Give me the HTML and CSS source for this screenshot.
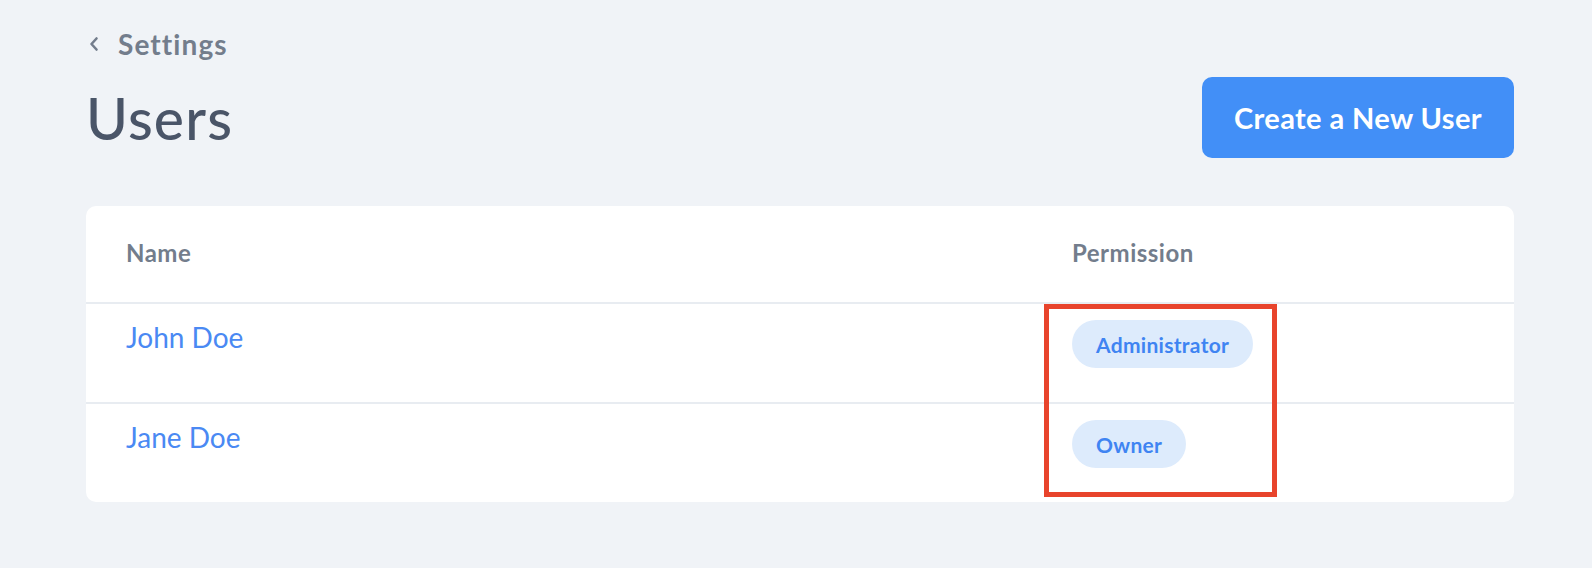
FILE: index.html
```html
<!DOCTYPE html>
<html lang="en">
<head>
<meta charset="utf-8">
<title>Users</title>
<link rel="stylesheet" href="styles.css">
</head>
<body>
<main class="page">
  <a class="breadcrumb" href="#">
    <svg class="chev" width="12" height="16" viewBox="0 0 12 16"><path d="M8.5 2.5 L3.5 8 L8.5 13.5" fill="none" stroke="currentColor" stroke-width="2.6" stroke-linecap="round" stroke-linejoin="round"/></svg>
    <span>Settings</span>
  </a>
  <div class="header">
    <h1 class="title">Users</h1>
    <button class="btn">Create a New User</button>
  </div>
  <section class="card">
    <div class="row head">
      <div class="cell">Name</div>
      <div class="cell">Permission</div>
    </div>
    <div class="row">
      <div class="cell"><a class="name" href="#">John Doe</a></div>
      <div class="cell"><span class="badge">Administrator</span></div>
    </div>
    <div class="row">
      <div class="cell"><a class="name" href="#">Jane Doe</a></div>
      <div class="cell"><span class="badge">Owner</span></div>
    </div>
    <div class="highlight"></div>
  </section>
</main>
</body>
</html>
```

FILE: styles.css
```css
html, body {
  margin: 0;
  padding: 0;
  background: #f0f3f7;
  font-family: Lato, "Noto Sans", sans-serif;
}
.page {
  padding: 28px 78px 0 86px;
}
.breadcrumb {
  display: flex;
  align-items: center;
  gap: 18px;
  color: #737d8c;
  text-decoration: none;
  font-weight: 700;
  font-size: 28px;
  letter-spacing: 1.1px;
  line-height: 32px;
  padding-left: 2px;
}
.chev { color: #737d8c; }
.header {
  display: flex;
  align-items: center;
  justify-content: space-between;
  margin-top: 17px;
}
.title {
  margin: 0;
  font-size: 57px;
  font-weight: 500;
  letter-spacing: 1.2px;
  color: #4a5568;
  line-height: 80px;
}
.btn {
  width: 312px;
  height: 81px;
  border: 0;
  border-radius: 10px;
  background: #428ff7;
  color: #fff;
  font-family: inherit;
  font-weight: 700;
  font-size: 29px;
  letter-spacing: 0.4px;
}
.card {
  position: relative;
  margin-top: 48px;
  background: #fff;
  border-radius: 10px;
}
.row {
  display: grid;
  grid-template-columns: 946px 1fr;
  padding-left: 40px;
  height: 100px;
  border-top: 2px solid #e8ecf1;
  box-sizing: border-box;
}
.row.head {
  height: 96px;
  padding-bottom: 4px;
  border-top: 0;
  align-items: center;
  color: #737d8c;
  font-weight: 700;
  font-size: 24px;
  letter-spacing: 0.5px;
}
.row:not(.head) .cell {
  padding-top: 16px;
}
.name {
  display: block;
  color: #4a89f3;
  text-decoration: none;
  font-size: 28px;
  line-height: 34px;
}
.badge {
  display: inline-flex;
  align-items: center;
  height: 48px;
  padding: 0 24px;
  border-radius: 24px;
  background: #ddebfc;
  color: #3f84f2;
  font-weight: 700;
  font-size: 21px;
  letter-spacing: 0.3px;
}
.highlight {
  position: absolute;
  left: 958px;
  top: 98px;
  width: 233px;
  height: 193px;
  box-sizing: border-box;
  border: 5px solid #e8442c;
  pointer-events: none;
}
```
